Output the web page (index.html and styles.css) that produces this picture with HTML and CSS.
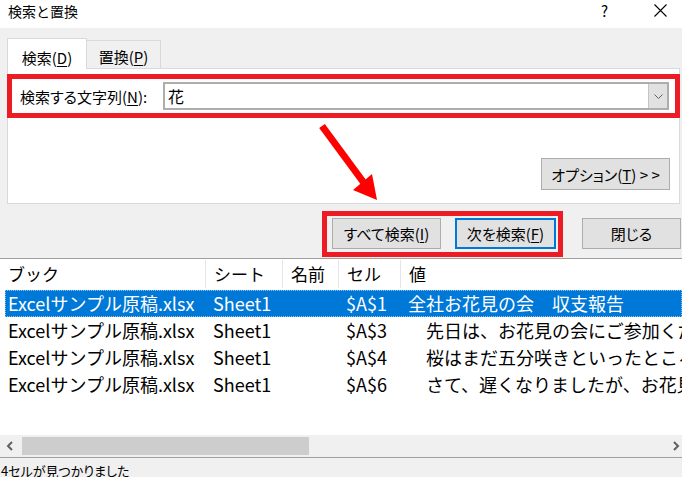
FILE: index.html
```html
<!DOCTYPE html>
<html lang="ja">
<head>
<meta charset="utf-8">
<title>検索と置換</title>
<link rel="stylesheet" href="styles.css">
</head>
<body>
<div class="window">
  <header class="titlebar">
    <span class="title">検索と置換</span>
    <span class="help">?</span>
    <span class="close"><svg width="13" height="13" viewBox="0 0 13 13"><path d="M0.5 0.5 L12.5 12.5 M12.5 0.5 L0.5 12.5" stroke="#000" stroke-width="1.1" fill="none"/></svg></span>
  </header>
  <section class="main">
    <div class="tabs">
      <div class="tab active">検索(<u>D</u>)</div>
      <div class="tab">置換(<u>P</u>)</div>
    </div>
    <div class="panel">
      <div class="mark find-row">
        <span class="find-label">検索する文字列(<u>N</u>):</span>
        <div class="combo">
          <span class="combo-text">花</span>
          <span class="combo-btn"><svg width="9" height="5" viewBox="0 0 9 5"><path d="M0.5 0.5 L4.5 4.5 L8.5 0.5" stroke="#606060" stroke-width="1" fill="none"/></svg></span>
        </div>
      </div>
      <div class="options-row">
        <button class="btn options">オプション(<u>T</u>) &gt; &gt;</button>
      </div>
    </div>
    <div class="actions">
      <div class="mark btn-group">
        <button class="btn find-all">すべて検索(<u>I</u>)</button>
        <button class="btn find-next focused">次を検索(<u>F</u>)</button>
      </div>
      <button class="btn close-btn">閉じる</button>
    </div>
  </section>
  <section class="results">
    <div class="thead">
      <div class="th">ブック</div>
      <div class="th">シート</div>
      <div class="th">名前</div>
      <div class="th">セル</div>
      <div class="th last">値</div>
    </div>
    <div class="tbody">
      <div class="tr selected">
        <div class="td first">Excelサンプル原稿.xlsx</div>
        <div class="td">Sheet1</div>
        <div class="td"></div>
        <div class="td">$A$1</div>
        <div class="td">全社お花見の会　収支報告</div>
      </div>
      <div class="tr">
        <div class="td first">Excelサンプル原稿.xlsx</div>
        <div class="td">Sheet1</div>
        <div class="td"></div>
        <div class="td">$A$3</div>
        <div class="td">　先日は、お花見の会にご参加くださいました皆様、ありがとうございました。</div>
      </div>
      <div class="tr">
        <div class="td first">Excelサンプル原稿.xlsx</div>
        <div class="td">Sheet1</div>
        <div class="td"></div>
        <div class="td">$A$4</div>
        <div class="td">　桜はまだ五分咲きといったところでしたが、楽しいひとときでした。</div>
      </div>
      <div class="tr">
        <div class="td first">Excelサンプル原稿.xlsx</div>
        <div class="td">Sheet1</div>
        <div class="td"></div>
        <div class="td">$A$6</div>
        <div class="td">　さて、遅くなりましたが、お花見の会の収支をご報告いたします。</div>
      </div>
    </div>
  </section>
  <div class="hscroll">
    <span class="arrow-btn left"><svg width="8" height="10" viewBox="0 0 8 10"><path d="M6 1 L2 5 L6 9" stroke="#606060" stroke-width="2" fill="none"/></svg></span>
    <span class="thumb"></span>
    <span class="arrow-btn right"><svg width="8" height="10" viewBox="0 0 8 10"><path d="M2 1 L6 5 L2 9" stroke="#606060" stroke-width="2" fill="none"/></svg></span>
  </div>
  <footer class="status">4セルが見つかりました</footer>
  <svg class="annot-arrow" width="682" height="477" viewBox="0 0 682 477">
    <line x1="322" y1="126" x2="364" y2="183" stroke="#ff0000" stroke-width="7"/>
    <polygon points="377,200 353,190 372,174" fill="#ff0000"/>
  </svg>
</div>
</body>
</html>
```
FILE: styles.css
```css
* { box-sizing: border-box; }
html, body { margin: 0; padding: 0; }
body {
  font-family: "Noto Sans CJK JP", "Noto Sans", sans-serif;
  color: #000;
  background: #fff;
}
.window {
  position: relative;
  width: 682px;
  height: 477px;
  overflow: hidden;
  background: #fff;
}
u { text-decoration: underline; text-underline-offset: 2px; }

.titlebar {
  height: 28px;
  display: flex;
  align-items: flex-start;
  padding-top: 1px;
  background: #fff;
}
.title { margin-left: 8px; font-size: 14px; line-height: 20px; }
.help { margin-left: auto; font-size: 15px; line-height: 20px; margin-right: 46px; }
.close { margin-right: 15px; padding-top: 3px; display: flex; }

.main {
  background: #f0f0f0;
  padding-top: 10px;
  padding-bottom: 1px;
  border-bottom: 1px solid #a0a0a0;
  font-feature-settings: "palt";
}
.tabs {
  display: flex;
  align-items: flex-end;
  padding-left: 7px;
  height: 30px;
}
.tab {
  font-size: 15px;
  display: flex;
  align-items: center;
  justify-content: center;
  padding-top: 4px;
  height: 28px;
  width: 74px;
  border: 1px solid #d9d9d9;
  border-left: none;
  border-bottom: none;
  background: #f0f0f0;
}
.tab.active {
  width: 80px;
  height: 31px;
  margin-bottom: -1px;
  border-left: 1px solid #d9d9d9;
  background: #fff;
  position: relative;
  z-index: 1;
  padding-top: 6px;
}
.panel {
  margin: 0 2px 0 7px;
  height: 136px;
  border: 1px solid #d9d9d9;
  background: #fff;
}
.mark { border: 5px solid #ed1c24; }
.find-row {
  margin: 5px -1px 0 -1px;
  height: 44px;
  display: flex;
  align-items: center;
  padding: 0 6px 0 8px;
}
.find-label { flex: 0 0 143px; font-size: 15px; }
.combo {
  flex: 1;
  height: 28px;
  border: 2px solid #adadad;
  display: flex;
  align-items: stretch;
  background: #fff;
}
.combo-text { flex: 1; font-size: 16px; line-height: 24px; padding-left: 3px; }
.combo-btn {
  width: 19px;
  background: #e1e1e1;
  border-left: 1px solid #c4c4c4;
  display: flex;
  align-items: center;
  justify-content: center;
}
.options-row {
  display: flex;
  justify-content: flex-end;
  padding-right: 9px;
  margin-top: 40px;
}
.btn {
  font-family: inherit;
  font-feature-settings: "palt";
  font-size: 15px;
  color: #000;
  background: #e1e1e1;
  border: 1px solid #adadad;
  padding: 0;
  margin: 0;
  height: 31px;
  display: flex;
  align-items: center;
  justify-content: center;
}
.options { width: 129px; height: 32px; }
.actions {
  display: flex;
  justify-content: flex-end;
  align-items: flex-start;
  margin-top: 7px;
  padding-right: 1px;
}
.btn-group {
  width: 241px;
  height: 46px;
  display: flex;
  align-items: flex-start;
  gap: 14px;
  padding: 2px 2px 0 5px;
}
.find-all { width: 109px; }
.find-next { width: 101px; }
.focused { border: 2px solid #0078d7; }
.close-btn { width: 99px; margin-left: 19px; margin-top: 7px; }

.results {
  height: 176px;
  background: #fff;
  overflow: hidden;
}
.thead {
  display: grid;
  grid-template-columns: 206px 77px 56px 62px 1fr;
  height: 31px;
}
.th {
  font-size: 17px;
  line-height: 28px;
  margin-top: 1px;
  height: 28px;
  padding-left: 8px;
  border-right: 1px solid #e5e5e5;
  white-space: nowrap;
}
.th.last { border-right: none; }
.tbody { padding-left: 5px; }
.tr {
  display: grid;
  grid-template-columns: 201px 77px 56px 62px 1fr;
  height: 27px;
  font-size: 18px;
  line-height: 27px;
  white-space: nowrap;
}
.td { padding-left: 7px; overflow: hidden; }
.td.first { padding-left: 3px; }
.tr.selected {
  background: #0078d7;
  color: #fff;
  outline: 1px dotted #8ec3ef;
  outline-offset: -1px;
}

.hscroll {
  height: 22px;
  background: #f0f0f0;
  display: flex;
  align-items: center;
}
.arrow-btn { display: flex; align-items: center; height: 100%; }
.arrow-btn.left { width: 22px; padding-left: 6px; }
.arrow-btn.right { margin-left: auto; width: 10px; }
.thumb { width: 287px; height: 18px; background: #cdcdcd; }

.status {
  border-top: 1px solid #a0a0a0;
  background: #f0f0f0;
  height: 20px;
  font-size: 13px;
  line-height: 20px;
  padding-left: 1px;
  padding-top: 3px;
  font-feature-settings: "palt";
}
.annot-arrow {
  position: absolute;
  left: 0;
  top: 0;
  pointer-events: none;
}
```
